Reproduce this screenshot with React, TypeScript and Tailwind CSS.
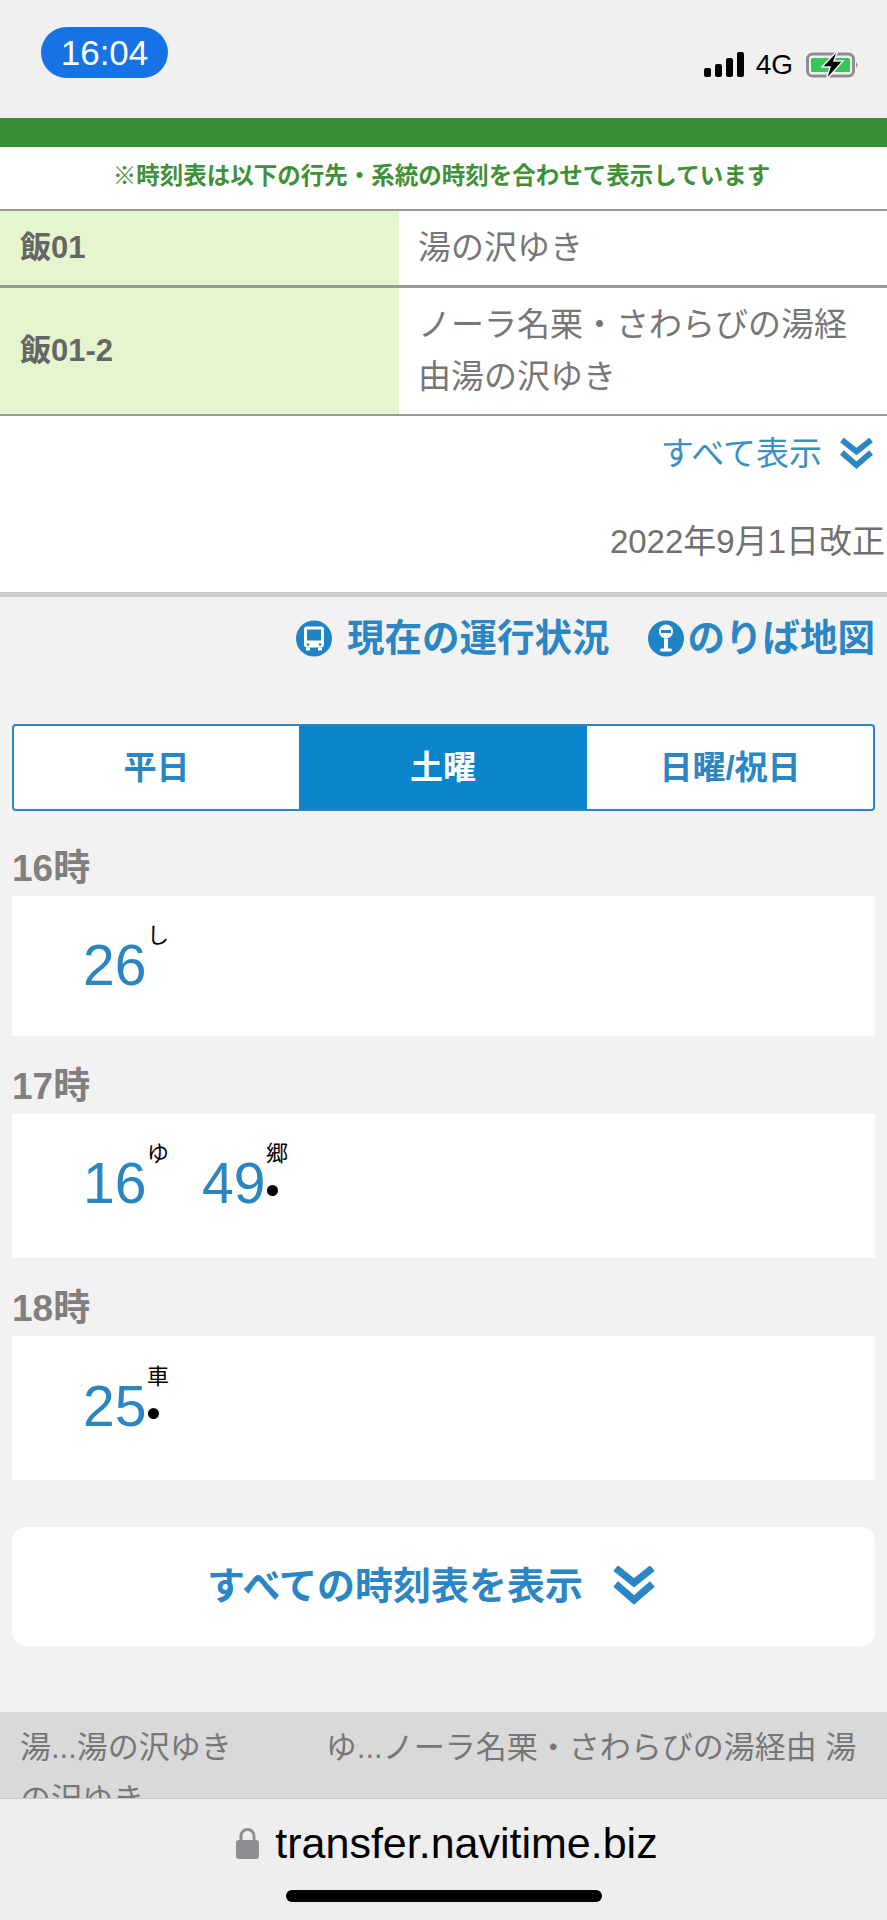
import React from "react";

const hours = [
  { label: "16時", minutes: [{ min: "26", mark: "し", dot: false }], cardH: "h-[140px] pt-[37px]" },
  {
    label: "17時",
    minutes: [
      { min: "16", mark: "ゆ", dot: false },
      { min: "49", mark: "郷", dot: true },
    ],
    cardH: "h-[144px] pt-[37px]",
  },
  { label: "18時", minutes: [{ min: "25", mark: "車", dot: true }], cardH: "h-[144px] pt-[38px]" },
];

function DoubleChevron({ className }: { className: string }) {
  return (
    <svg viewBox="0 0 36 32" className={className} fill="none" stroke="#2a86c4" strokeWidth="6">
      <path d="M3 1 L18 13 L33 1" />
      <path d="M3 14 L18 27 L33 14" />
    </svg>
  );
}

function BusIcon() {
  return (
    <svg viewBox="0 0 36 36" className="w-[36px] h-[37px]">
      <circle cx="18" cy="18" r="18" fill="#1f84c6" />
      <rect x="8" y="6" width="20" height="21" rx="3" fill="#fff" />
      <rect x="11" y="9" width="14" height="11" fill="#1f84c6" />
      <rect x="10" y="27" width="4" height="3" fill="#fff" />
      <rect x="22" y="27" width="4" height="3" fill="#fff" />
      <circle cx="12" cy="24" r="1.3" fill="#1f84c6" />
      <circle cx="24" cy="24" r="1.3" fill="#1f84c6" />
    </svg>
  );
}

function PinIcon() {
  return (
    <svg viewBox="0 0 36 36" className="w-[36px] h-[37px]">
      <circle cx="18" cy="18" r="18" fill="#1f84c6" />
      <circle cx="18" cy="11" r="7" fill="#fff" />
      <rect x="13" y="9.5" width="10" height="3" fill="#1f84c6" />
      <rect x="16" y="18" width="4" height="11" fill="#fff" />
      <rect x="12" y="28" width="12" height="3" rx="1.5" fill="#fff" />
    </svg>
  );
}

export default function App() {
  return (
    <div className="w-[887px] h-[1920px] overflow-hidden bg-[#f2f2f2] [font-family:'Liberation_Sans','Noto_Sans_CJK_JP',sans-serif]">
      {/* Status bar */}
      <div className="h-[118px] bg-[#f0f0f0] flex justify-between items-start pl-[41px] pr-[27px]">
        <div className="mt-[27px] w-[127px] h-[51px] rounded-[26px] bg-[#1573e6] text-white text-[35px] leading-[51px] text-center">
          16:04
        </div>
        <div className="mt-[52px] flex items-center h-[25px]">
          <svg viewBox="0 0 40 25" className="w-[40px] h-[25px]" fill="#000">
            <rect x="0" y="16" width="7" height="9" rx="2" />
            <rect x="11" y="12" width="7" height="13" rx="2" />
            <rect x="22" y="6" width="7" height="19" rx="2" />
            <rect x="33" y="0" width="7" height="25" rx="2" />
          </svg>
          <span className="ml-[12px] text-[28px] leading-[25px] text-black">4G</span>
          <svg viewBox="0 0 54 26" className="ml-[13px] w-[54px] h-[26px] overflow-visible">
            <rect x="1.5" y="2" width="46" height="22" rx="5" fill="none" stroke="#8e8e8e" strokeWidth="3" />
            <rect x="5" y="6" width="39" height="14" rx="1.5" fill="#34c759" />
            <path d="M50 10 Q53 13 50 16 Z" fill="#8e8e8e" />
            <path d="M32 -2 L16 15 L24 15 L20 28 L37 9 L28 9 Z" fill="#000" stroke="#f0f0f0" strokeWidth="1.5" />
          </svg>
        </div>
      </div>

      {/* Route header */}
      <div className="h-[29px] bg-[#358f33]" />
      <div className="h-[62px] bg-white flex items-center justify-center pb-[3px] pr-[4px] text-[23.5px] font-bold text-[#3f9139]">
        ※時刻表は以下の行先・系統の時刻を合わせて表示しています
      </div>
      <div className="border-t-2 border-[#999]">
        <div className="flex h-[77px] border-b-[3px] border-[#999] bg-white">
          <div className="w-[399px] bg-[#e5f6cf] flex items-center pl-[20px] text-[31px] font-bold text-[#666]">飯01</div>
          <div className="flex-1 flex items-center pl-[19px] text-[33px] text-[#777]">湯の沢ゆき</div>
        </div>
        <div className="flex h-[128px] border-b-2 border-[#999] bg-white">
          <div className="w-[399px] bg-[#e5f6cf] flex items-center pl-[20px] text-[31px] font-bold text-[#666]">飯01-2</div>
          <div className="flex-1 flex items-center pl-[19px] pr-[30px] text-[33px] leading-[52px] text-[#777]">
            ノーラ名栗・さわらびの湯経由湯の沢ゆき
          </div>
        </div>
      </div>
      <div className="h-[176px] bg-white pt-[18px] pr-[13px]">
        <div className="flex justify-end items-center h-[40px] text-[33px] text-[#3a90c4]">
          すべて表示
          <DoubleChevron className="ml-[17px] w-[35px] h-[33px]" />
        </div>
        <div className="mt-[48px] -mr-[11px] text-right text-[33px] leading-[40px] text-[#707070]">2022年9月1日改正</div>
      </div>
      <div className="h-[5px] bg-[#cccccc]" />

      {/* Links */}
      <div className="mt-[23px] h-[37px] flex justify-end items-center pr-[12px] text-[37.5px] font-bold text-[#2a86c4]">
        <BusIcon />
        <span className="ml-[15px]">現在の運行状況</span>
        <span className="ml-[38px]"><PinIcon /></span>
        <span className="ml-[4px]">のりば地図</span>
      </div>

      {/* Day tabs */}
      <div className="mt-[67px] mx-[12px] h-[87px] flex rounded-[4px] border-2 border-[#2a86c4] bg-white overflow-hidden text-[33px] font-bold">
        <div className="w-[285px] flex items-center justify-center text-[#2a86c4]">平日</div>
        <div className="w-[288px] flex items-center justify-center bg-[#0a85cc] text-white">土曜</div>
        <div className="flex-1 flex items-center justify-center text-[#2a86c4]">日曜/祝日</div>
      </div>

      {/* Hours */}
      <div className="mt-[36px] mx-[12px] flex flex-col">
        {hours.map((h) => (
          <div key={h.label} className="mb-[29px]">
            <div className="h-[44px] leading-[44px] text-[37px] font-bold text-[#808080]">{h.label}</div>
            <div className={`${h.cardH} mt-[5px] bg-white pl-[71px] flex`}>
              {h.minutes.map((m) => (
                <div key={m.min} className="relative w-[119px] h-[64px] text-[57px] leading-[64px] text-[#2a86c0] [font-family:'Liberation_Sans',sans-serif]">
                  {m.min}
                  <span className="absolute left-[64px] -top-[13px] text-[22px] leading-[26px] text-black [font-family:'Noto_Sans_CJK_JP',sans-serif]">
                    {m.mark}
                  </span>
                  {m.dot && <span className="absolute left-[65px] top-[34px] w-[11px] h-[11px] rounded-full bg-black" />}
                </div>
              ))}
            </div>
          </div>
        ))}
      </div>

      {/* All timetable button */}
      <div className="mt-[18px] mx-[12px] h-[119px] rounded-[14px] bg-white flex items-center justify-center pr-[24px] text-[38px] font-bold text-[#2a86c4]">
        すべての時刻表を表示
        <DoubleChevron className="ml-[29px] w-[44px] h-[41px]" />
      </div>

      {/* Legend */}
      <div className="mt-[66px] h-[86px] overflow-hidden bg-[#d9d9d9] pl-[20px] pr-[26px] pt-[10px] text-[31px] leading-[52px] text-[#777]">
        <span className="mr-[94px]">湯...湯の沢ゆき</span>
        <span>ゆ...ノーラ名栗・さわらびの湯経由 湯の沢ゆき</span>
      </div>

      {/* Browser bar */}
      <div className="h-[122px] bg-[#eeeeee] border-t border-[#c8c8c8] flex flex-col items-center">
        <div className="mt-[21px] h-[46px] pl-[7px] flex items-center">
          <svg viewBox="0 0 23 32" className="w-[23px] h-[32px]">
            <path d="M5 14 V9 a6.5 6.5 0 0 1 13 0 V14" fill="none" stroke="#8e8e93" strokeWidth="3" />
            <rect x="0" y="13" width="23" height="19" rx="3" fill="#8e8e93" />
          </svg>
          <span className="ml-[16px] text-[43px] leading-[46px] text-black">transfer.navitime.biz</span>
        </div>
        <div className="mt-[24px] w-[316px] h-[12px] rounded-full bg-black" />
      </div>
    </div>
  );
}
